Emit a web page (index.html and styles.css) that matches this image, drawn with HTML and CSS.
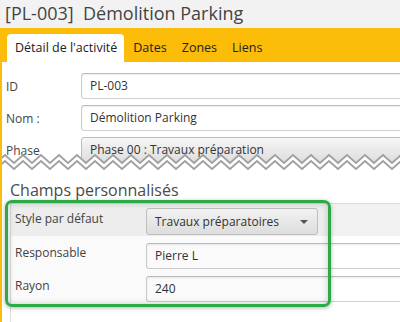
FILE: index.html
```html
<!DOCTYPE html>
<html>
<head>
    <title>Démolition Parking</title>
    <link rel="stylesheet" href="styles.css">
</head>
<body>
    <div class="titlebar">[PL-003]&nbsp; Démolition Parking</div>
    <div class="tabs">
        <div class="tab active">Détail de l'activité</div>
        <div class="tab">Dates</div>
        <div class="tab">Zones</div>
        <div class="tab">Liens</div>
    </div>
    <div class="content">
        <div class="top">
            <div class="row">
                <label>ID</label>
                <div class="input">PL-003</div>
            </div>
            <div class="row">
                <label>Nom :</label>
                <div class="input">Démolition Parking</div>
            </div>
            <div class="row">
                <label>Phase</label>
                <div class="input combo">Phase 00 : Travaux préparation</div>
            </div>
            <svg class="tear" width="398" height="20">
                <defs>
                    <pattern id="zz" patternUnits="userSpaceOnUse" width="18" height="20" x="-6">
                        <path d="M-9,2 L0,10 L9,2 L18,10 L27,2 L27,20 L-9,20 Z" fill="#fff"/>
                        <path d="M-9,2 L0,10 L9,2 L18,10 L27,2" fill="none" stroke="#a0a0a0" stroke-width="1.8"/>
                        <path d="M-9,8 L0,16 L9,8 L18,16 L27,8" fill="none" stroke="#a0a0a0" stroke-width="1.8"/>
                    </pattern>
                </defs>
                <rect width="398" height="20" fill="url(#zz)"/>
            </svg>
        </div>
        <h2>Champs personnalisés</h2>
        <div class="fields">
            <div class="frow shaded">
                <label>Style par défaut</label>
                <div class="select">Travaux préparatoires<span class="arrow"></span></div>
            </div>
            <div class="frow">
                <label>Responsable</label>
                <div class="input">Pierre L</div>
            </div>
            <div class="frow">
                <label>Rayon</label>
                <div class="input">240</div>
            </div>
            <div class="highlight"></div>
        </div>
    </div>
</body>
</html>
```

FILE: styles.css
```css
body {
    margin: 0;
    width: 400px;
    height: 322px;
    overflow: hidden;
    font-family: "Open Sans", Arial, sans-serif;
    font-size: 12px;
    color: #333;
    background: #fff;
}
.titlebar {
    height: 28px;
    line-height: 26px;
    padding-left: 5px;
    background: #f2f2f2;
    font-size: 18px;
    color: #444;
    white-space: nowrap;
}
.tabs {
    display: flex;
    height: 34px;
    padding: 6px 0 0 7px;
    box-sizing: border-box;
    background: #fcbc0a;
    font-size: 12.5px;
}
.tab {
    padding: 0 7px 0 8px;
    line-height: 28px;
    color: #222;
    white-space: nowrap;
}
.tab.active {
    background: #fff;
    border-radius: 4px 4px 0 0;
    margin-right: 1px;
}
.content {
    border-left: 2px solid #fcbc0a;
    height: 260px;
}
.top {
    position: relative;
    height: 110px;
    padding-top: 11px;
    box-sizing: border-box;
    overflow: hidden;
}
.row {
    display: flex;
    align-items: center;
    margin-bottom: 6px;
}
.row label {
    width: 75px;
    padding-left: 4px;
    color: #444;
}
.input {
    flex: 1;
    height: 26px;
    line-height: 24px;
    padding-left: 8px;
    margin-right: -10px;
    box-sizing: border-box;
    border: 1px solid #cfcfcf;
    border-top-color: #bdbdbd;
    border-radius: 3px;
    background: #fff;
    box-shadow: inset 0 1px 2px rgba(0, 0, 0, 0.08);
    white-space: nowrap;
}
.combo {
    background: linear-gradient(#f6f6f6, #dedede);
    border-color: #bbb;
    box-shadow: none;
}
.tear {
    position: absolute;
    left: 0;
    top: 91px;
}
h2 {
    margin: 8px 0 0 8px;
    font-size: 16px;
    line-height: 20px;
    font-weight: normal;
    color: #4a4a4a;
}
.fields {
    position: relative;
    margin-left: 8px;
    padding-top: 3px;
    border-left: 1px solid #ddd;
    height: 130px;
}
.frow {
    display: flex;
    align-items: flex-start;
    margin-top: 7px;
}
.frow.shaded {
    margin-top: 0;
    padding: 4px 0 1px;
    background: #f2f2f2;
    border-top: 1px solid #dcdcdc;
}
.frow label {
    width: 131px;
    padding-left: 4px;
    padding-top: 1px;
    color: #444;
}
.frow.shaded label {
    padding-top: 2px;
}
.select {
    position: relative;
    width: 172px;
    height: 27px;
    line-height: 25px;
    padding-left: 8px;
    box-sizing: border-box;
    border: 1px solid #c2c2c2;
    border-radius: 3px;
    background: linear-gradient(#f7f7f7, #e2e2e2);
}
.arrow {
    position: absolute;
    right: 9px;
    top: 11px;
    border-left: 4px solid transparent;
    border-right: 4px solid transparent;
    border-top: 4px solid #555;
}
.highlight {
    position: absolute;
    left: -6px;
    top: 0;
    width: 326px;
    height: 107px;
    box-sizing: border-box;
    border: 3px solid #2daa48;
    border-radius: 7px;
    background: rgba(0, 0, 0, 0.02);
    box-shadow: inset 0 0 6px rgba(0, 0, 0, 0.2), 0 1px 4px rgba(0, 0, 0, 0.3);
}
```
